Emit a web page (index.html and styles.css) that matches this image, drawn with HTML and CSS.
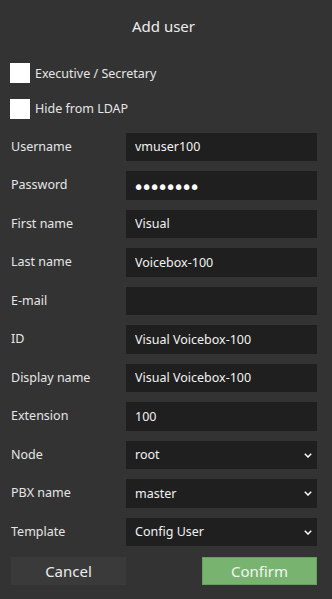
FILE: index.html
```html
<!DOCTYPE html>
<html lang="en">
<head>
<meta charset="utf-8">
<title>Add user</title>
<link rel="stylesheet" href="styles.css">
</head>
<body>
<div class="dialog">
  <div class="title">Add user</div>
  <label class="check"><span class="box"></span><span>Executive / Secretary</span></label>
  <label class="check"><span class="box"></span><span>Hide from LDAP</span></label>
  <div class="form">
    <span class="lbl">Username</span><input class="field" type="text" value="vmuser100">
    <span class="lbl">Password</span><input class="field pw" type="password" value="12345678">
    <span class="lbl">First name</span><input class="field" type="text" value="Visual">
    <span class="lbl">Last name</span><input class="field" type="text" value="Voicebox-100">
    <span class="lbl">E-mail</span><input class="field" type="text" value="">
    <span class="lbl">ID</span><input class="field" type="text" value="Visual Voicebox-100">
    <span class="lbl">Display name</span><input class="field" type="text" value="Visual Voicebox-100">
    <span class="lbl">Extension</span><input class="field" type="text" value="100">
    <span class="lbl">Node</span>
    <span class="sel"><select class="field"><option>root</option></select><svg class="chev" viewBox="0 0 8 5" width="8" height="5"><path d="M0.8 0.8 L4 4 L7.2 0.8" fill="none" stroke="#ffffff" stroke-width="1.5"/></svg></span>
    <span class="lbl">PBX name</span>
    <span class="sel"><select class="field"><option>master</option></select><svg class="chev" viewBox="0 0 8 5" width="8" height="5"><path d="M0.8 0.8 L4 4 L7.2 0.8" fill="none" stroke="#ffffff" stroke-width="1.5"/></svg></span>
    <span class="lbl">Template</span>
    <span class="sel"><select class="field"><option>Config User</option></select><svg class="chev" viewBox="0 0 8 5" width="8" height="5"><path d="M0.8 0.8 L4 4 L7.2 0.8" fill="none" stroke="#ffffff" stroke-width="1.5"/></svg></span>
  </div>
  <div class="buttons">
    <button class="btn cancel" type="button">Cancel</button>
    <button class="btn confirm" type="button">Confirm</button>
  </div>
</div>
</body>
</html>
```

FILE: styles.css
```css
html, body {
  margin: 0;
  padding: 0;
  background: #333333;
}
body {
  font-family: "Noto Sans", "Open Sans", sans-serif;
  font-size: 12.5px;
  color: #e6e6e6;
  width: 332px;
  height: 599px;
  overflow: hidden;
}
.dialog {
  padding: 0 15px 0 10px;
}
.title {
  height: 53px;
  line-height: 53px;
  text-align: center;
  font-size: 15px;
  color: #ececec;
  margin-bottom: 10px;
}
.check {
  display: flex;
  align-items: center;
  gap: 5px;
  height: 20px;
  margin-bottom: 15.5px;
  font-size: 12.5px;
}
.box {
  width: 20px;
  height: 20px;
  background: #ffffff;
  flex: none;
}
.form {
  display: grid;
  grid-template-columns: 116px 1fr;
  row-gap: 10px;
  margin-top: -1.5px;
  align-items: center;
}
.lbl {
  padding-left: 1px;
  padding-bottom: 1px;
}
.field {
  box-sizing: border-box;
  height: 28.5px;
  width: 100%;
  margin: 0;
  border: none;
  outline: none;
  background: #1f1f1f;
  color: #f2f2f2;
  font-family: inherit;
  font-size: 12.5px;
  padding: 0 9px;
  border-radius: 0;
  appearance: none;
  -webkit-appearance: none;
}
.pw {
  font-family: "DejaVu Sans", sans-serif;
  font-size: 19px;
  letter-spacing: -3.2px;
  color: #ffffff;
  padding-top: 3px;
  padding-left: 7px;
}
.sel {
  position: relative;
  display: block;
}
.chev {
  position: absolute;
  right: 5px;
  top: 12px;
}
.buttons {
  display: flex;
  justify-content: space-between;
  margin-top: 10.5px;
  padding-left: 1px;
}
.btn {
  width: 115px;
  height: 28.5px;
  border: none;
  font-family: inherit;
  font-size: 15px;
  color: #ececec;
  padding: 0;
  border-radius: 0;
}
.cancel {
  background: #3a3a3a;
}
.confirm {
  background: #78b46f;
  border: 1px solid #6a9f62;
  color: #f4f4f4;
}
```
